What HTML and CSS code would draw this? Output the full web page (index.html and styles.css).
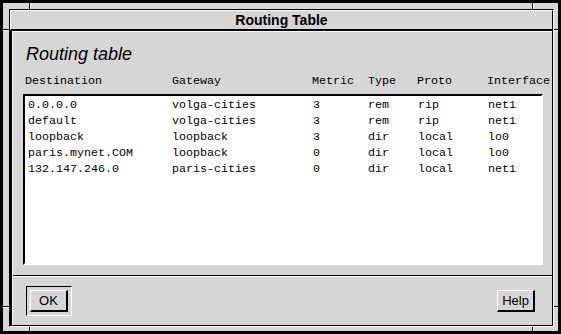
FILE: index.html
```html
<!DOCTYPE html>
<html lang="en">
<head>
    <meta charset="UTF-8">
    <title>Routing Table</title>
    <link rel="stylesheet" href="styles.css">
</head>
<body>
    <div class="frame">
        <!-- resize corner marks on the window border -->
        <span class="tick tick-v" style="left: 26px; top: 0;"></span>
        <span class="tick tick-v" style="left: 529px; top: 0;"></span>
        <span class="tick tick-v tick-short" style="left: 26px; top: 324px;"></span>
        <span class="tick tick-v tick-short" style="left: 529px; top: 324px;"></span>
        <span class="tick tick-h" style="left: 0; top: 26px;"></span>
        <span class="tick tick-h" style="left: 0; top: 303px;"></span>
        <span class="tick tick-h tick-short" style="left: 551px; top: 26px;"></span>
        <span class="tick tick-h tick-short" style="left: 551px; top: 303px;"></span>

        <div class="inner">
            <div class="titlebar">Routing Table</div>
            <div class="client">
                <div class="form">
                    <div class="work">
                        <h1 class="heading">Routing table</h1>
                        <div class="cols header">
                            <span>Destination</span>
                            <span>Gateway</span>
                            <span>Metric</span>
                            <span>Type</span>
                            <span>Proto</span>
                            <span>Interface</span>
                        </div>
                        <div class="list">
                            <div class="cols row">
                                <span>0.0.0.0</span><span>volga-cities</span><span>3</span><span>rem</span><span>rip</span><span>net1</span>
                            </div>
                            <div class="cols row">
                                <span>default</span><span>volga-cities</span><span>3</span><span>rem</span><span>rip</span><span>net1</span>
                            </div>
                            <div class="cols row">
                                <span>loopback</span><span>loopback</span><span>3</span><span>dir</span><span>local</span><span>lo0</span>
                            </div>
                            <div class="cols row">
                                <span>paris.mynet.COM</span><span>loopback</span><span>0</span><span>dir</span><span>local</span><span>lo0</span>
                            </div>
                            <div class="cols row">
                                <span>132.147.246.0</span><span>paris-cities</span><span>0</span><span>dir</span><span>local</span><span>net1</span>
                            </div>
                        </div>
                    </div>
                    <div class="actions">
                        <div class="default-ring">
                            <button class="btn">OK</button>
                        </div>
                        <button class="btn btn-help">Help</button>
                    </div>
                </div>
            </div>
        </div>
    </div>
</body>
</html>
```

FILE: styles.css
```css
body {
    margin: 0;
    padding: 0;
    background-color: #000;
    font-family: "Liberation Sans", Arial, sans-serif;
}
.frame {
    position: relative;
    width: 561px;
    height: 334px;
    box-sizing: border-box;
    border: 3px solid #000;
    padding: 6px 4px 4px 6px;
    background-color: #d6d6d6;
}
.tick {
    position: absolute;
    box-sizing: border-box;
}
.tick-v {
    width: 2px;
    height: 6px;
    border-left: 1px solid #000;
    border-right: 1px solid #fff;
}
.tick-h {
    width: 6px;
    height: 2px;
    border-top: 1px solid #000;
    border-bottom: 1px solid #fff;
}
.tick-v.tick-short {
    height: 4px;
}
.tick-h.tick-short {
    width: 4px;
}
.inner {
    height: 100%;
    box-sizing: border-box;
    display: flex;
    flex-direction: column;
    border-top: 1px solid #000;
    border-left: 1px solid #000;
    border-bottom: 1px solid #fff;
    border-right: 1px solid #fff;
}
.titlebar {
    height: 20px;
    box-sizing: border-box;
    border-top: 1px solid #fff;
    border-left: 1px solid #fff;
    border-bottom: 1px solid #000;
    border-right: 1px solid #000;
    text-align: center;
    font-weight: bold;
    font-size: 14px;
    line-height: 18px;
    color: #000;
}
.client {
    flex: 1;
    display: flex;
    border-top: 1px solid #000;
    border-left: 2px solid #000;
    border-right: 1px solid #000;
    border-bottom: 1px solid #000;
}
.form {
    flex: 1;
    display: flex;
    flex-direction: column;
    border-top: 1px solid #fff;
    border-left: 1px solid #fff;
}
.work {
    flex: 1;
    padding: 0 0 0 10px;
}
.heading {
    margin: 11px 0 0 3px;
    font-size: 18px;
    font-style: italic;
    font-weight: normal;
    line-height: 22px;
    color: #000;
}
.cols {
    display: grid;
    font-family: "Liberation Mono", "Courier New", monospace;
    font-size: 11.67px;
    white-space: nowrap;
    color: #000;
}
.header {
    margin: 9px 0 0 2px;
    line-height: 14px;
    grid-template-columns: 147px 140px 56px 49px 70px auto;
}
.list {
    margin-top: 6px;
    width: 520px;
    height: 171px;
    box-sizing: border-box;
    padding: 1px 0 0 3px;
    background-color: #fff;
    border-top: 2px solid #000;
    border-left: 2px solid #000;
    border-bottom: 2px solid #fff;
    border-right: 2px solid #fff;
}
.row {
    line-height: 16px;
    grid-template-columns: 144px 141px 55px 50px 70px auto;
}
.actions {
    height: 50px;
    box-sizing: border-box;
    display: flex;
    justify-content: space-between;
    align-items: flex-start;
    padding: 10px 17px 0 13px;
    border-top: 1px solid #000;
    box-shadow: inset 0 1px 0 #fff;
}
.default-ring {
    width: 46px;
    height: 30px;
    box-sizing: border-box;
    padding: 3px;
    border-top: 1px solid #000;
    border-left: 1px solid #000;
    border-bottom: 1px solid #fff;
    border-right: 1px solid #fff;
}
.btn {
    width: 38px;
    height: 22px;
    box-sizing: border-box;
    padding: 0;
    margin: 0;
    background-color: #d6d6d6;
    border-top: 1px solid #fff;
    border-left: 1px solid #fff;
    border-bottom: 2px solid #000;
    border-right: 2px solid #000;
    border-radius: 0;
    font-family: "Liberation Sans", Arial, sans-serif;
    font-size: 13px;
    color: #000;
}
.btn-help {
    margin-top: 4px;
}
```
